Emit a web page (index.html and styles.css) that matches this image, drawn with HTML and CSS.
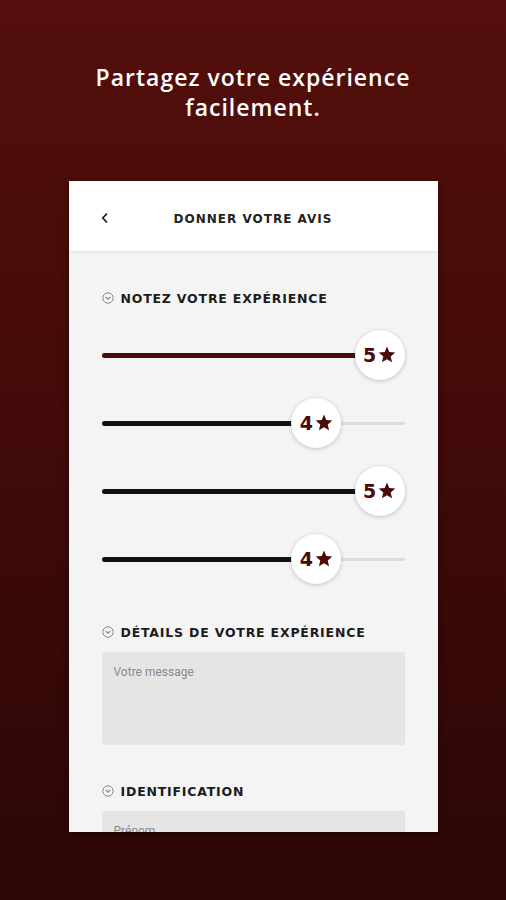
FILE: index.html
```html
<!DOCTYPE html>
<html lang="fr">
<head>
    <meta charset="UTF-8">
    <meta name="viewport" content="width=device-width, initial-scale=1.0">
    <title>Donner votre avis</title>
    <link rel="stylesheet" href="styles.css">
</head>
<body>
    <h1 class="promo">Partagez votre expérience<br>facilement.</h1>

    <div class="phone">
        <div class="topbar">
            <span class="back">
                <svg width="8" height="12" viewBox="0 0 8 12"><path d="M6 1.5 1.8 6 6 10.5" fill="none" stroke="#222" stroke-width="1.8"/></svg>
            </span>
            <span class="title">DONNER VOTRE AVIS</span>
            <span></span>
        </div>

        <div class="content">
            <h2 class="section first">
                <svg class="chev" width="12" height="12" viewBox="0 0 12 12"><circle cx="6" cy="6" r="5.2" fill="none" stroke="#888" stroke-width="1"/><path d="M3.7 5 6 7.2 8.3 5" fill="none" stroke="#888" stroke-width="1.1"/></svg>
                NOTEZ VOTRE EXPÉRIENCE
            </h2>

            <div class="slider red" style="--pos:1">
                <div class="track"><div class="fill"></div></div>
                <div class="thumb">5<svg class="star" width="18" height="17" viewBox="0 0 24 23"><path d="M12 0.8 15.1 8.2 23.2 8.9 17 14.1 18.9 22 12 17.8 5.1 22 7 14.1 0.8 8.9 8.9 8.2Z"/></svg></div>
            </div>
            <div class="slider" style="--pos:0.75">
                <div class="track"><div class="fill"></div></div>
                <div class="thumb">4<svg class="star" width="18" height="17" viewBox="0 0 24 23"><path d="M12 0.8 15.1 8.2 23.2 8.9 17 14.1 18.9 22 12 17.8 5.1 22 7 14.1 0.8 8.9 8.9 8.2Z"/></svg></div>
            </div>
            <div class="slider" style="--pos:1">
                <div class="track"><div class="fill"></div></div>
                <div class="thumb">5<svg class="star" width="18" height="17" viewBox="0 0 24 23"><path d="M12 0.8 15.1 8.2 23.2 8.9 17 14.1 18.9 22 12 17.8 5.1 22 7 14.1 0.8 8.9 8.9 8.2Z"/></svg></div>
            </div>
            <div class="slider" style="--pos:0.75">
                <div class="track"><div class="fill"></div></div>
                <div class="thumb">4<svg class="star" width="18" height="17" viewBox="0 0 24 23"><path d="M12 0.8 15.1 8.2 23.2 8.9 17 14.1 18.9 22 12 17.8 5.1 22 7 14.1 0.8 8.9 8.9 8.2Z"/></svg></div>
            </div>

            <h2 class="section">
                <svg class="chev" width="12" height="12" viewBox="0 0 12 12"><circle cx="6" cy="6" r="5.2" fill="none" stroke="#888" stroke-width="1"/><path d="M3.7 5 6 7.2 8.3 5" fill="none" stroke="#888" stroke-width="1.1"/></svg>
                DÉTAILS DE VOTRE EXPÉRIENCE
            </h2>
            <div class="field message">Votre message</div>

            <h2 class="section">
                <svg class="chev" width="12" height="12" viewBox="0 0 12 12"><circle cx="6" cy="6" r="5.2" fill="none" stroke="#888" stroke-width="1"/><path d="M3.7 5 6 7.2 8.3 5" fill="none" stroke="#888" stroke-width="1.1"/></svg>
                IDENTIFICATION
            </h2>
            <div class="field">Prénom</div>
        </div>
    </div>
</body>
</html>
```

FILE: styles.css
```css
:root {
    --wine: #4d0a0a;
    --panel: #f4f4f4;
    --field: #e5e5e5;
}
body {
    margin: 0;
    height: 900px;
    overflow: hidden;
    background: linear-gradient(to bottom, #540f0c 0%, #430b09 45%, #2b0705 100%);
    font-family: "Open Sans", sans-serif;
}
.promo {
    margin: 62px 0 0;
    color: #fff;
    text-align: center;
    font-size: 23px;
    font-weight: 600;
    line-height: 30px;
    letter-spacing: 1px;
}
.phone {
    width: 369px;
    height: 651px;
    margin: 59px auto 0;
    background: var(--panel);
    overflow: hidden;
    box-shadow: 0 2px 8px rgba(0, 0, 0, 0.45);
}
.topbar {
    height: 70px;
    box-sizing: border-box;
    padding: 6px 32px 0;
    background: #fff;
    display: grid;
    grid-template-columns: 1fr auto 1fr;
    align-items: center;
    box-shadow: 0 1px 3px rgba(0, 0, 0, 0.08);
    position: relative;
}
.back {
    display: flex;
    margin-top: -2px;
}
.title {
    font-family: "DejaVu Sans", sans-serif;
    font-weight: bold;
    font-size: 12px;
    letter-spacing: 1px;
    color: #222;
}
.content {
    padding: 0 33px;
}
.section {
    display: flex;
    align-items: center;
    gap: 7px;
    margin: 38px 0 0;
    height: 16px;
    font-family: "DejaVu Sans", sans-serif;
    font-weight: bold;
    font-size: 12.5px;
    letter-spacing: 0.8px;
    color: #1c1c1c;
}
.section.first {
    margin-top: 39px;
    margin-bottom: 15px;
}
.slider {
    position: relative;
    height: 68px;
    display: flex;
    align-items: center;
}
.track {
    width: 100%;
    height: 3px;
    border-radius: 2px;
    background: #dcdcdc;
}
.fill {
    height: 5px;
    margin-top: -1px;
    border-radius: 3px;
    background: #111;
    width: calc((100% - 50px) * var(--pos) + 25px);
}
.slider.red .fill {
    background: var(--wine);
}
.thumb {
    position: absolute;
    top: 9px;
    left: calc((100% - 50px) * var(--pos));
    width: 50px;
    height: 50px;
    border-radius: 50%;
    background: #fff;
    box-shadow: 0 1px 4px rgba(0, 0, 0, 0.22);
    display: flex;
    align-items: center;
    justify-content: center;
    font-family: "DejaVu Sans", sans-serif;
    font-weight: bold;
    font-size: 19px;
    color: var(--wine);
}
.star {
    fill: var(--wine);
    margin-left: 2px;
    margin-top: -1px;
}
.slider + .section {
    margin-top: 31px;
}
.field {
    margin-top: 12px;
    background: var(--field);
    border-radius: 3px;
    height: 93px;
    box-sizing: border-box;
    padding: 13px 12px;
    font-family: Roboto, sans-serif;
    font-size: 12px;
    color: #8a8a8a;
}
.field.message + .section {
    margin-top: 38px;
}
```
